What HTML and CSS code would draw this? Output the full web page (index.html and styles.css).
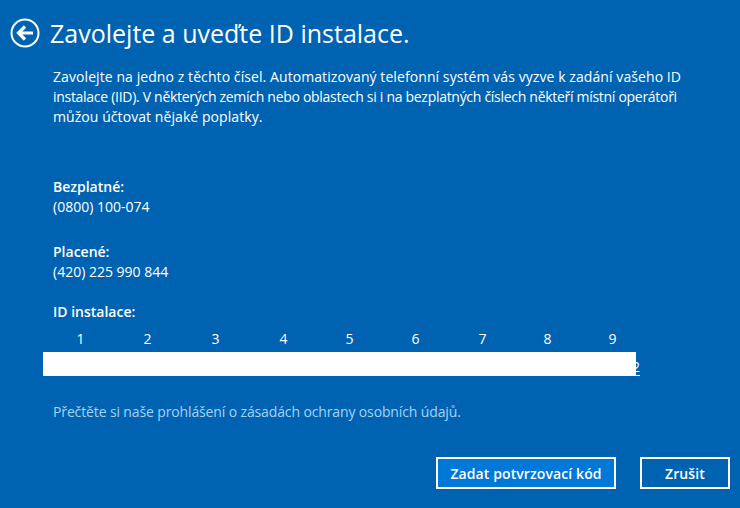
FILE: index.html
```html
<!DOCTYPE html>
<html lang="cs">
<head>
<meta charset="utf-8">
<title>Zavolejte a uveďte ID instalace</title>
<link rel="stylesheet" href="styles.css">
</head>
<body>
<div class="page">
  <header class="head">
    <svg class="back" width="30" height="30" viewBox="0 0 30 30" aria-hidden="true">
      <circle cx="15" cy="15" r="13.5" fill="none" stroke="#fff" stroke-width="2"/>
      <path d="M23 15H9M15 8.500L8.500 15l6.500 6.500" fill="none" stroke="#fff" stroke-width="3.200"/>
    </svg>
    <h1 class="title">Zavolejte a uveďte ID instalace.</h1>
  </header>
  <main class="content">
    <p class="intro">
      <span class="line l1">Zavolejte na jedno z těchto čísel. Automatizovaný telefonní systém vás vyzve k zadání vašeho ID</span>
      <span class="line l2">instalace (IID). V některých zemích nebo oblastech si i na bezplatných číslech někteří místní operátoři</span>
      <span class="line l3">můžou účtovat nějaké poplatky.</span>
    </p>
    <section class="phone first">
      <div class="label">Bezplatné:</div>
      <div class="num">(0800) 100-074</div>
    </section>
    <section class="phone">
      <div class="label">Placené:</div>
      <div class="num">(420) 225 990 844</div>
    </section>
    <div class="label idlabel">ID instalace:</div>
    <div class="cols">
      <span>1</span><span>2</span><span>3</span><span>4</span><span>5</span><span>6</span><span>7</span><span>8</span><span>9</span>
    </div>
    <div class="idrow">
      <span class="peek">2</span>
      <div class="mask"></div>
    </div>
    <p class="privacy">Přečtěte si naše prohlášení o zásadách ochrany osobních údajů.</p>
  </main>
  <footer class="actions">
    <button class="btn primary">Zadat potvrzovací kód</button>
    <button class="btn">Zrušit</button>
  </footer>
</div>
</body>
</html>
```
FILE: styles.css
```css
* { box-sizing: border-box; }
html, body { margin: 0; height: 100%; }
body { background: #0063b1; color: #fff; font-family: "Open Sans", "Noto Sans", sans-serif; overflow: hidden; }
.page { width: 740px; height: 508px; display: flex; flex-direction: column; }
.head { display: flex; align-items: center; gap: 10px; padding: 18px 0 0 10px; height: 47px; }
.back { flex: none; }
.title { margin: 0; font-weight: 400; font-size: 25px; line-height: 30px; color: #fff; }
.content { flex: 1; padding: 0 0 0 53px; font-size: 14px; }
.intro { margin: 20px 0 0; line-height: 20px; }
.line { display: block; white-space: nowrap; }
.l1 { letter-spacing: 0.08px; }
.l2 { letter-spacing: -0.29px; }
.l3 { letter-spacing: 0.07px; }
.phone.first { margin-top: 50px; }
.phone { margin-top: 25px; line-height: 20px; }
.label { font-weight: 600; line-height: 20px; }
.num { line-height: 20px; }
.idlabel { margin-top: 20px; }
.cols { display: flex; margin-top: 7px; height: 20px; line-height: 20px; padding-left: 23.5px; }
.cols span { width: 67px; }
.cols span:nth-child(2), .cols span:nth-child(3) { width: 68px; }
.cols span:nth-child(4), .cols span:nth-child(5) { width: 66px; }
.cols span:nth-child(7), .cols span:nth-child(8) { width: 65px; }
.idrow { position: relative; height: 24px; margin-left: -10px; margin-top: 3px; width: 600px; }
.mask { position: relative; width: 593px; height: 24px; background: #fff; }
.peek { position: absolute; left: 589px; top: 5px; line-height: 20px; border-bottom: 1px solid #fff; height: 19px; }
.privacy { margin: 26px 0 0; color: #a6d1f5; line-height: 20px; letter-spacing: -0.13px; }
.actions { display: flex; justify-content: flex-end; gap: 24px; padding: 0 10px 19px 0; }
.btn { height: 32px; border: 2px solid #fff; background: transparent; color: #fff; font: 600 14px "Open Sans", "Noto Sans", sans-serif; letter-spacing: 0.1px; padding: 0; width: 90px; }
.btn.primary { background: #0078d7; width: 180px; }
```
